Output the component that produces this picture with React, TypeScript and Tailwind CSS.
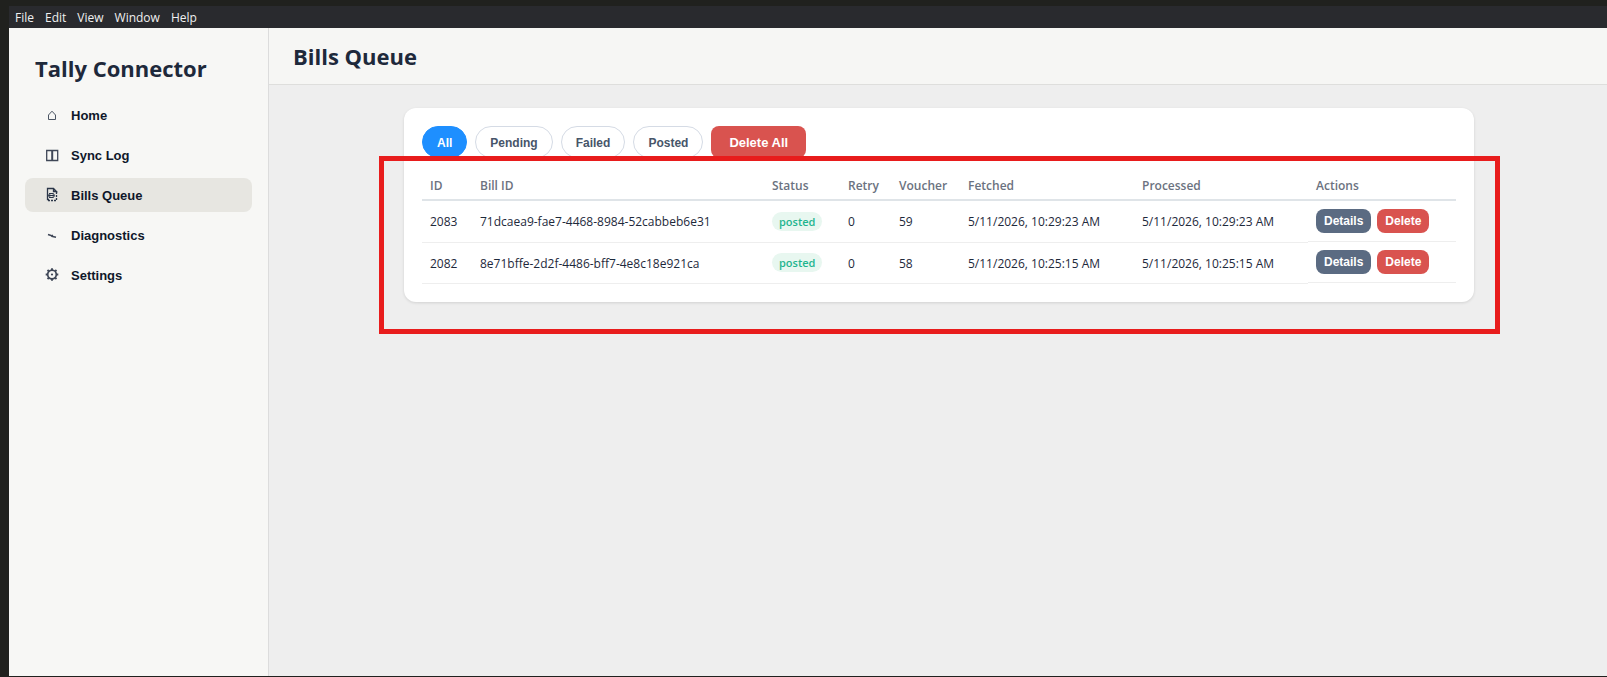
import React, { useState } from 'react';

type Filter = 'All' | 'Pending' | 'Failed' | 'Posted';

interface Bill {
    id: number;
    billId: string;
    status: string;
    retry: number;
    voucher: number;
    fetched: string;
    processed: string;
}

const MENU = ['File', 'Edit', 'View', 'Window', 'Help'];

const FILTERS: Filter[] = ['All', 'Pending', 'Failed', 'Posted'];

const BILLS: Bill[] = [
    {
        id: 2083,
        billId: '71dcaea9-fae7-4468-8984-52cabbeb6e31',
        status: 'posted',
        retry: 0,
        voucher: 59,
        fetched: '5/11/2026, 10:29:23 AM',
        processed: '5/11/2026, 10:29:23 AM',
    },
    {
        id: 2082,
        billId: '8e71bffe-2d2f-4486-bff7-4e8c18e921ca',
        status: 'posted',
        retry: 0,
        voucher: 58,
        fetched: '5/11/2026, 10:25:15 AM',
        processed: '5/11/2026, 10:25:15 AM',
    },
];

const HomeIcon = () => (
    <svg width="18" height="18" viewBox="0 0 18 18" fill="none" stroke="#4b5563" aria-hidden="true">
        <path d="M5.5 12.5V8L9 4.200L12.500 8v4.500z" />
    </svg>
);

const LogIcon = () => (
    <svg width="18" height="18" viewBox="0 0 18 18" fill="none" stroke="#3f4757" aria-hidden="true">
        <path d="M3.700 3.500h11v10h-11z" strokeWidth="1.300" />
        <path d="M9.200 3.500v10" strokeWidth="2" />
    </svg>
);

const QueueIcon = () => (
    <svg width="18" height="18" viewBox="0 0 18 18" fill="none" stroke="#2b3648" aria-hidden="true">
        <path d="M6 12.500H4.500V1.500H10.500L13.500 4.500H10.500V1.500" strokeWidth="1.300" />
        <path d="M13.500 5V13.500H5" strokeWidth="1.300" strokeDasharray="2 1" />
        <path d="M6 6.500H10.500M6 10.500H10.500M5.500 8.500H11" />
        <ellipse cx="8.500" cy="8.500" rx="3" ry="2" />
    </svg>
);

const DiagnosticsIcon = () => (
    <svg width="18" height="18" viewBox="0 0 18 18" fill="none" stroke="#3f4757" aria-hidden="true">
        <path d="M5 7.500l4.500 1.500M8 9.500L10 8M8.500 9.200l4.500 1" strokeWidth="1.500" />
    </svg>
);

const SettingsIcon = () => (
    <svg width="18" height="18" viewBox="0 0 18 18" fill="none" stroke="#3f4757" aria-hidden="true">
        <circle cx="9" cy="7.500" r="4.300" strokeWidth="1.700" />
        <circle cx="9" cy="7.500" r="1.100" fill="#3f4757" stroke="none" />
        <path
            d="M9 1.200v2M9 11.800v2M2.700 7.500h2M13.300 7.500h2M4.500 3l1.400 1.400M12.100 10.600l1.400 1.400M13.500 3l-1.400 1.400M5.900 10.600L4.500 12"
            strokeWidth="1.900"
        />
    </svg>
);

const NAV = [
    { label: 'Home', icon: <HomeIcon /> },
    { label: 'Sync Log', icon: <LogIcon /> },
    { label: 'Bills Queue', icon: <QueueIcon /> },
    { label: 'Diagnostics', icon: <DiagnosticsIcon /> },
    { label: 'Settings', icon: <SettingsIcon /> },
];

const MenuBar = () => (
    <div className="flex h-[22px] items-center gap-[11px] bg-[#292a2e] px-1.5 pt-0.5 text-xs text-[#f0f0f0]">
        {MENU.map((item) => (
            <button key={item} type="button">{item}</button>
        ))}
    </div>
);

const Sidebar: React.FC<{ active: string; onSelect: (label: string) => void }> = ({ active, onSelect }) => (
    <aside className="w-[260px] shrink-0 border-r border-[#dcdcdc] bg-[#f7f7f5] px-4 pt-6">
        <div className="px-2.5 text-[22px] leading-8 font-bold text-[#1e293b]">Tally Connector</div>
        <nav className="mt-3.5 flex flex-col gap-1.5">
            {NAV.map(({ label, icon }) => (
                <button
                    key={label}
                    type="button"
                    onClick={() => onSelect(label)}
                    className={`flex h-[34px] items-center gap-2.5 rounded-lg px-[18px] pt-0.5 text-left font-['Liberation_Sans',Arial,sans-serif] text-[13px] font-bold text-[#0f172a] ${active === label ? 'bg-[#e7e6e1]' : ''}`}
                >
                    {icon}
                    {label}
                </button>
            ))}
        </nav>
    </aside>
);

const BillsTable: React.FC<{ bills: Bill[] }> = ({ bills }) => (
    <table className="w-full table-fixed border-collapse text-left text-xs text-[#1e293b]">
        <colgroup>
            <col className="w-[50px]" />
            <col />
            <col className="w-[76px]" />
            <col className="w-[51px]" />
            <col className="w-[69px]" />
            <col className="w-[174px]" />
            <col className="w-[174px]" />
            <col className="w-[148px]" />
        </colgroup>
        <thead>
            <tr className="h-7 border-b-2 border-[#dfe4e8] text-[#6b7280]">
                {['ID', 'Bill ID', 'Status', 'Retry', 'Voucher', 'Fetched', 'Processed', 'Actions'].map((title) => (
                    <th key={title} className="px-2 font-semibold">{title}</th>
                ))}
            </tr>
        </thead>
        <tbody>
            {bills.map((bill) => (
                <tr key={bill.id}>
                    <td className="border-b border-[#eeeeee] px-2 pt-0.5">{bill.id}</td>
                    <td className="border-b border-[#eeeeee] px-2 pt-0.5">{bill.billId}</td>
                    <td className="border-b border-[#eeeeee] px-2">
                        <span className="inline-block rounded-full bg-[#e8f7f0] px-[7px] text-[11px] leading-[19px] font-semibold text-[#1fb58f]">
                            {bill.status}
                        </span>
                    </td>
                    <td className="border-b border-[#eeeeee] px-2 pt-0.5">{bill.retry}</td>
                    <td className="border-b border-[#eeeeee] px-2 pt-0.5">{bill.voucher}</td>
                    <td className="border-b border-[#eeeeee] px-2 pt-0.5">{bill.fetched}</td>
                    <td className="border-b border-[#eeeeee] px-2 pt-0.5">{bill.processed}</td>
                    <td className="flex gap-1.5 border-b border-[#eeeeee] p-2 font-['Liberation_Sans',Arial,sans-serif]">
                        <button type="button" className="h-6 rounded-lg bg-[#5b6b82] px-2 font-bold text-white">Details</button>
                        <button type="button" className="h-6 rounded-lg bg-[#d9534f] px-2 font-bold text-white">Delete</button>
                    </td>
                </tr>
            ))}
        </tbody>
    </table>
);

const App: React.FC = () => {
    const [page, setPage] = useState('Bills Queue');
    const [filter, setFilter] = useState<Filter>('All');

    const bills = BILLS.filter((bill) => filter === 'All' || bill.status === filter.toLowerCase());

    return (
        <div className="flex min-h-screen flex-col bg-[#20211e] pt-1.5 pb-px pl-[9px] font-['Open_Sans','Noto_Sans',sans-serif]">
            <MenuBar />
            <div className="flex flex-1">
                <Sidebar active={page} onSelect={setPage} />
                <main className="min-w-0 flex-1 bg-[#eeeeee]">
                    <header className="border-b border-[#dededc] bg-[#f6f6f4] px-6 py-3">
                        <h1 className="text-[22px] leading-8 font-bold text-[#1e293b]">{page}</h1>
                    </header>

                    <div className="pt-[23px] pl-0.5">
                        <section className="relative mx-auto max-w-[1070px] rounded-xl bg-white p-[18px] shadow-[0_1px_3px_rgba(0,0,0,0.12)]">
                            <div className="mb-3.5 flex gap-2 font-['Liberation_Sans',Arial,sans-serif]">
                                {FILTERS.map((name) => (
                                    <button
                                        key={name}
                                        type="button"
                                        onClick={() => setFilter(name)}
                                        className={`h-8 rounded-2xl border px-3.5 pt-0.5 text-xs font-bold ${filter === name
                                            ? 'border-[#1e8fff] bg-[#1e8fff] text-white'
                                            : 'border-[#d5dbe5] bg-white text-[#475569]'
                                            }`}
                                    >
                                        {name}
                                    </button>
                                ))}
                                <button type="button" className="h-8 rounded-lg bg-[#d9534f] px-[18px] pt-0.5 text-[13px] font-bold text-white">
                                    Delete All
                                </button>
                            </div>

                            <BillsTable bills={bills} />

                            {/* Highlight frame over the table */}
                            <div className="pointer-events-none absolute top-12 -right-[26px] -bottom-8 -left-[25px] border-5 border-[#e81c1c]" />
                        </section>
                    </div>
                </main>
            </div>
        </div>
    );
};

export default App;
